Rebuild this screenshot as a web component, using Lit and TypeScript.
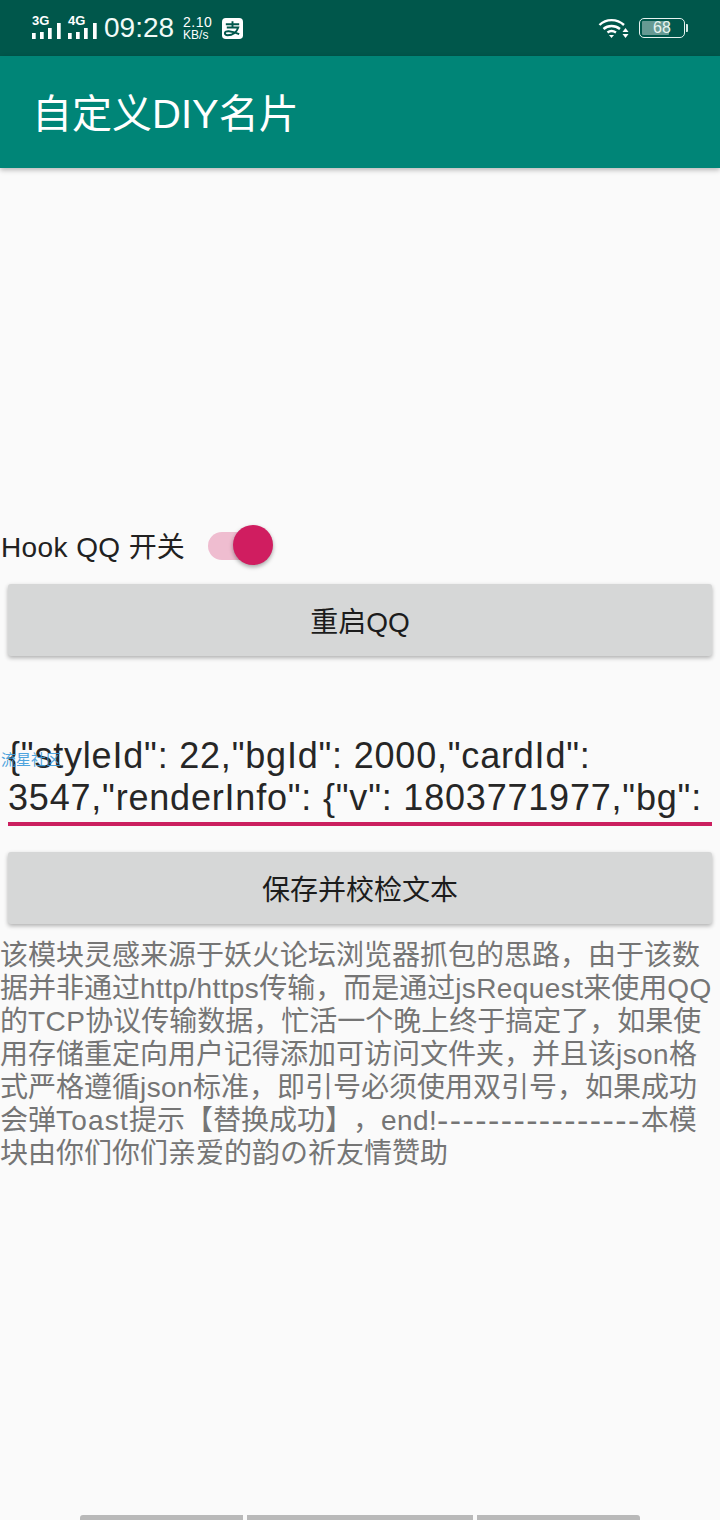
import { LitElement, html, css } from "lit";
import { customElement } from "lit/decorators.js";

const bodyLines = [
  "该模块灵感来源于妖火论坛浏览器抓包的思路，由于该数",
  "据并非通过http/https传输，而是通过jsRequest来使用QQ",
  "的TCP协议传输数据，忙活一个晚上终于搞定了，如果使",
  "用存储重定向用户记得添加可访问文件夹，并且该json格",
  "式严格遵循json标准，即引号必须使用双引号，如果成功",
  "会弹Toast提示【替换成功】，end!----------------本模",
  "块由你们你们亲爱的韵の祈友情赞助",
];

function spaced(line: string) {
  return line.split(/(-+|[\x21-\x2c\x2e-\x7e]+)/).map((part, i) => {
    if (i % 2 === 0) return part;
    if (part.startsWith("-")) return html`<span class="dash">${part}</span>`;
    if (part === "Toast") return html`<span class="wide">${part}</span>`;
    return html`<span class="latin">${part}</span>`;
  });
}

@customElement("app-root")
export class AppRoot extends LitElement {
  static styles = css`
    :host {
      display: block;
      width: 720px;
      height: 1520px;
      background: #fafafa;
      font-family: "Liberation Sans", "Noto Sans CJK SC", sans-serif;
      text-spacing-trim: space-all;
      overflow: hidden;
      position: relative;
    }
    .status {
      height: 56px;
      background: #00574b;
      color: #fff;
      display: flex;
      align-items: center;
      padding: 0 32px;
      box-sizing: border-box;
    }
    .sig { display: block; margin-right: 7px; overflow: visible; }
    .time { font-size: 28px; line-height: 56px; margin-right: 9px; color: #f1fbf8; }
    .speed { font-size: 14px; line-height: 14px; margin-right: 10px; letter-spacing: 0.5px; }
    .speed small { display: block; font-size: 12px; line-height: 12px; letter-spacing: 0; }
    .spacer { flex: 1; }
    .bat {
      width: 46px; height: 20px; border: 1.5px solid #e6f2ef; border-radius: 5px;
      box-sizing: border-box; position: relative; overflow: hidden;
      font-size: 16px; line-height: 17px; text-align: center; margin-left: 9px;
      color: #e6f4f0;
    }
    .bat i { position: absolute; left: 2px; top: 2px; bottom: 2px; width: 27px; background: rgba(255,255,255,.4); border-radius: 1px; }
    .bat span { position: relative; }
    .nub { width: 2px; height: 8px; background: #d8e8e4; margin-left: 1px; border-radius: 0 1px 1px 0; }
    .toolbar {
      height: 112px;
      background: #008577;
      color: #fff;
      font-size: 40px;
      line-height: 116px;
      padding-left: 32px;
      box-shadow: 0 2px 5px rgba(0,0,0,.28);
      position: relative;
    }
    .content { padding-top: 356px; }
    .row { display: flex; align-items: center; height: 42px; margin-bottom: 18px; }
    .row-label { font-size: 28px; color: #212121; margin-left: 1px; }
    .switch { position: relative; width: 66px; height: 42px; margin-left: 23px; }
    .track { position: absolute; left: 0; top: 8px; height: 28px; width: 56px; border-radius: 14px; background: #efbdd0; }
    .thumb {
      position: absolute; left: 25px; top: 1px; width: 40px; height: 40px; border-radius: 50%;
      background: #d01d60; box-shadow: 0 2px 4px rgba(0,0,0,.35);
    }
    .btn {
      margin: 0 8px;
      height: 72px;
      background: #d6d7d7;
      border-radius: 3px;
      box-shadow: 0 2px 4px rgba(0,0,0,.3);
      display: flex; align-items: center; justify-content: center;
      font-size: 28px; color: #1c1c1c;
    }
    .edit { margin: 79px 8px 0; position: relative; height: 91px; }
    .edit-line { font-size: 36px; line-height: 42px; color: #262626; white-space: nowrap; letter-spacing: 0.8px; }
    .underline { position: absolute; left: 0; right: 0; top: 87px; height: 4px; background: #cb1f5f; }
    .hint { position: absolute; left: -7px; top: 15px; font-size: 15px; line-height: 20px; color: #3b9bdc; opacity: .9; white-space: nowrap; }
    .save { margin-top: 26px; }
    .desc { margin: 15px 0 0; font-size: 28px; line-height: 33px; color: #757575; }
    .desc div { white-space: nowrap; }
    .latin { letter-spacing: 0.4px; }
    .wide { letter-spacing: 1.2px; }
    .dash { font-size: 34px; line-height: 0; vertical-align: -2px; letter-spacing: 1.4px; }
    .nav {
      position: absolute; left: 80px; bottom: 0; width: 560px; height: 5px;
      display: flex; gap: 4px;
    }
    .nav i { height: 5px; background: #b9b9b9; display: block; }
    .nav i:first-child { width: 163px; border-radius: 3px 0 0 0; }
    .nav i:nth-child(2) { width: 226px; }
    .nav i:last-child { width: 163px; border-radius: 0 3px 0 0; }
  `;

  private signal(label: string) {
    return html`<svg class="sig" width="29" height="26" viewBox="0 0 29 26" fill="#fff">
      <text x="0" y="10" font-size="13" font-weight="700" font-family="Liberation Sans, sans-serif">${label}</text>
      <rect x="0" y="18" width="3.700" height="6"/>
      <rect x="8" y="17" width="3.700" height="7"/>
      <rect x="16" y="13" width="3.700" height="11"/>
      <rect x="25" y="8" width="3.700" height="16"/>
    </svg>`;
  }

  render() {
    return html`
      <div class="status">
        ${this.signal("3G")}${this.signal("4G")}
        <span class="time">09:28</span>
        <div class="speed">2.10<small>KB/s</small></div>
        <svg width="21" height="21" viewBox="0 0 22 22">
          <rect width="22" height="22" rx="4" fill="#fff"/>
          <path d="M4 6.500h14M11 3.500v6M5 10h12c-1.500 5-6 8-11 8-2 0-3-1-3-2.300C3 13 9 13 18 17" fill="none" stroke="#00574b" stroke-width="2"/>
        </svg>
        <div class="spacer"></div>
        <svg width="32" height="22" viewBox="0 0 32 22" fill="none" stroke="#fff" stroke-width="2.400">
          <path d="M1.500 8C8 1.500 19 1.500 26 8"/>
          <path d="M5.500 12C10 8 17 8 22 12"/>
          <path d="M9.500 15.500C12 13.500 15 13.500 18 15.500"/>
          <path d="M11 18h5l-2.500 3z" fill="#fff" stroke="none"/>
          <path d="M24.500 15l3-4 3 4zM24.500 17h6l-3 4z" fill="#fff" stroke="none"/>
        </svg>
        <div class="bat"><i></i><span>68</span></div>
        <div class="nub"></div>
      </div>
      <div class="toolbar">自定义DIY名片</div>
      <div class="content">
        <div class="row">
          <span class="row-label"><span class="latin">Hook QQ </span>开关</span>
          <div class="switch"><div class="track"></div><div class="thumb"></div></div>
        </div>
        <div class="btn">重启QQ</div>
        <div class="edit">
          <div class="edit-line">{"styleId": 22,"bgId": 2000,"cardId":</div>
          <div class="edit-line">3547,"renderInfo": {"v": 1803771977,"bg":</div>
          <div class="underline"></div>
          <div class="hint">流星社区</div>
        </div>
        <div class="btn save">保存并校检文本</div>
        <div class="desc">${bodyLines.map((l) => html`<div>${spaced(l)}</div>`)}</div>
      </div>
      <div class="nav"><i></i><i></i><i></i></div>
    `;
  }
}
